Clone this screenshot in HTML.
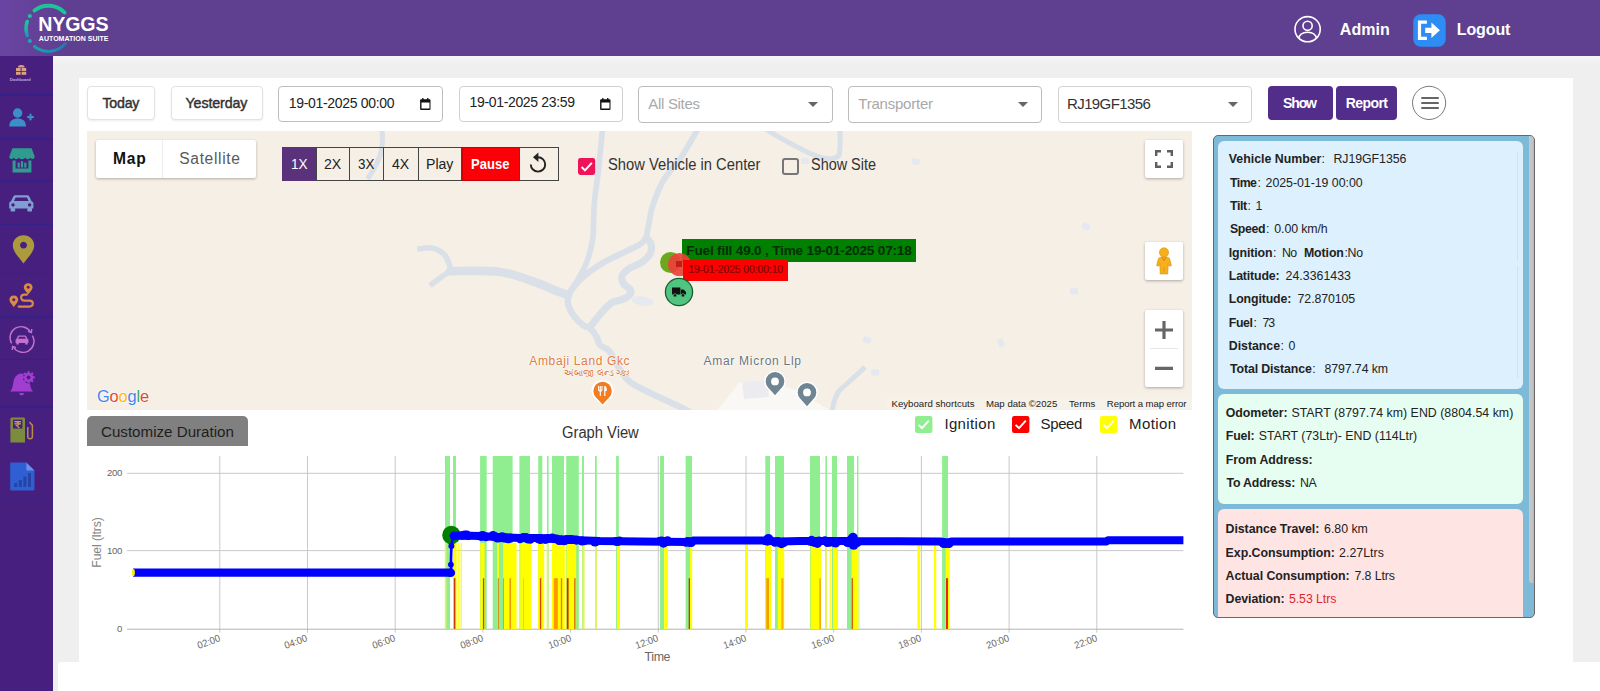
<!DOCTYPE html>
<html lang="en"><head><meta charset="utf-8"><title>NYGGS Automation Suite - Vehicle Playback</title>
<style>
html,body{margin:0;padding:0}
body{width:1600px;height:691px;overflow:hidden;position:relative;background:#efeff0;font-family:"Liberation Sans",sans-serif;}
.t{position:absolute;white-space:pre;}
.a{position:absolute;}
svg{position:absolute;overflow:visible}
#hdr{left:0;top:0;width:1600px;height:56px;background:linear-gradient(90deg,#6a44a2 0,#5e3f90 70px,#5e3f90 100%);}
#side{left:0;top:56px;width:53px;height:635px;background:#47207f;}
#card{left:79px;top:78px;width:1494px;height:613px;background:#fff;}
#bot{left:58px;top:662px;width:1542px;height:29px;background:#fff;border-top-left-radius:3px}
.btn{box-sizing:border-box;border:1px solid #e2e2e2;border-radius:4px;background:#fff;box-shadow:0 1px 2px rgba(0,0,0,.08);}
.inp{box-sizing:border-box;border:1px solid #c4c4c4;border-radius:4px;background:#fff;}
.pb{box-sizing:border-box;border-radius:4px;background:#532d8a;}
.sp{box-sizing:border-box;border:1px solid #444;top:147px;height:33.5px;}
.mc{background:#fff;border-radius:2px;box-shadow:0 1px 3px rgba(0,0,0,.3);}
</style></head><body>
<div class="a" id="hdr"></div>
<div class="a" id="side"></div>
<div class="a" style="left:53px;top:56px;width:1547px;height:8px;background:linear-gradient(#f6f6f8,#efeff0)"></div>
<div class="a" id="card"></div>
<div class="a" id="bot"></div>

<svg class="a" style="left:0;top:0" width="130" height="56" viewBox="0 0 130 56">
<defs><linearGradient id="lg" x1="0" y1="0" x2="0" y2="1"><stop offset="0" stop-color="#1fc39a"/><stop offset="0.55" stop-color="#1fb3a6"/><stop offset="1" stop-color="#2390c0"/></linearGradient>
<linearGradient id="lg2" gradientUnits="userSpaceOnUse" x1="30" y1="0" x2="68" y2="0"><stop offset="0" stop-color="#17a8a0"/><stop offset="0.6" stop-color="#1c8fb4"/><stop offset="1" stop-color="#2c6fa6"/></linearGradient></defs>
<g fill="none" stroke-linecap="round">
<path d="M34.5 10.5 A22.5 22.5 0 0 1 64.5 12.5" stroke="#1fc39a" stroke-width="3.900"/>
<path d="M27.2 21.5 A22.5 22.5 0 0 0 27.2 35.5" stroke="url(#lg)" stroke-width="3.600"/>
<path d="M34.5 46.5 A22.5 22.5 0 0 0 65.5 43.500" stroke="url(#lg2)" stroke-width="2.900"/>
</g>
<circle cx="29.8" cy="16" r="2.1" fill="#1fc39a"/><circle cx="29.8" cy="41" r="2.1" fill="#1fa6ae"/>
</svg>
<span class="t" style="left:38.30px;top:14.51px;font-size:19.6px;line-height:19.6px;color:#fff;font-weight:bold;letter-spacing:-0.148px;">NYGGS</span>
<span class="t" style="left:38.80px;top:34.97px;font-size:7px;line-height:7px;color:#fff;font-weight:bold;letter-spacing:0.023px;">AUTOMATION SUITE</span>
<svg class="a" style="left:1293px;top:15px" width="29" height="29" viewBox="0 0 29 29">
<defs><clipPath id="uc"><circle cx="14.6" cy="14.2" r="12.6"/></clipPath></defs>
<circle cx="14.6" cy="14.2" r="12.6" fill="none" stroke="#fff" stroke-width="1.6"/>
<circle cx="14.6" cy="10.8" r="4.6" fill="none" stroke="#fff" stroke-width="1.6"/>
<path d="M5.6 24 C6.2 18.6 10 17.2 14.6 17.2 C19.2 17.2 23 18.6 23.6 24" fill="none" stroke="#fff" stroke-width="1.6" clip-path="url(#uc)"/>
</svg>
<span class="t" style="left:1339.80px;top:21.66px;font-size:16px;line-height:16px;color:#fff;font-weight:bold;letter-spacing:0.032px;">Admin</span>
<svg class="a" style="left:1413px;top:14px" width="33" height="33" viewBox="0 0 33 33">
<rect x="0.2" y="0.3" width="32.5" height="32.5" rx="7.5" fill="#2e8cf5"/>
<path d="M13.9 8.100 H6.500 V24.400 H13.900" fill="none" stroke="#fff" stroke-width="3.200"/>
<path d="M12.2 13.700 H18.400 V8.400 L26.900 16.200 L18.400 24 V18.900 H12.200 Z" fill="#fff"/>
</svg>
<span class="t" style="left:1456.80px;top:21.66px;font-size:16px;line-height:16px;color:#fff;font-weight:bold;letter-spacing:-0.119px;">Logout</span>
<div class="a" style="left:0;top:94px;width:53px;height:1.5px;background:#34218a"></div>
<div class="a" style="left:0;top:138px;width:53px;height:1.5px;background:#34218a"></div>
<div class="a" style="left:0;top:180px;width:53px;height:1.5px;background:#34218a"></div>
<div class="a" style="left:0;top:223.5px;width:53px;height:1.5px;background:#34218a"></div>
<div class="a" style="left:0;top:272.5px;width:53px;height:1.5px;background:#34218a"></div>
<div class="a" style="left:0;top:316px;width:53px;height:1.5px;background:#34218a"></div>
<div class="a" style="left:0;top:358.5px;width:53px;height:1.5px;background:#34218a"></div>
<div class="a" style="left:0;top:406px;width:53px;height:1.5px;background:#34218a"></div>
<div class="a" style="left:0;top:451px;width:53px;height:1px;background:#3f2186"></div>
<div class="a" style="left:0;top:498px;width:53px;height:1px;background:#3f2186"></div>
<svg class="a" style="left:15px;top:65px" width="13" height="11" viewBox="0 0 13 11"><g fill="#dba184">
<rect x="1" y="3" width="4.6" height="3"/><rect x="6.6" y="3" width="4.6" height="3"/><rect x="1" y="6.8" width="4.6" height="3"/><rect x="6.6" y="6.8" width="4.6" height="3"/><path d="M3 2.4 A3.3 2.4 0 0 1 9.6 2.4Z"/></g></svg>
<span class="t" style="left:9.80px;top:78.48px;font-size:4.4px;line-height:4.4px;color:#b9a3dc;font-weight:bold;letter-spacing:-0.260px;">Dashboard</span>
<svg class="a" style="left:9px;top:108px" width="26" height="20" viewBox="0 0 26 20"><g fill="#3a8fc9">
<circle cx="8.6" cy="5" r="4.7"/><path d="M0.3 18.6 C0.3 12.6 4 10.6 8.6 10.6 C13.2 10.6 17 12.6 17 18.6Z"/>
<rect x="18.2" y="8" width="6.6" height="2.1"/><rect x="20.45" y="5.75" width="2.1" height="6.6"/></g></svg>
<svg class="a" style="left:9px;top:148px" width="26" height="25" viewBox="0 0 26 25"><g fill="#2f9c8f">
<path d="M3.4 0.3 H22.6 L25.7 8.6 C25.7 11.6 22.4 11.9 21.4 9.6 C20.4 11.9 17.2 11.9 16.2 9.6 C15.2 11.9 10.8 11.9 9.8 9.6 C8.8 11.9 5.6 11.9 4.6 9.6 C3.6 11.9 0.3 11.6 0.3 8.6Z"/>
<path d="M3.6 12.4 H6.6 V20.6 H19.4 V12.4 H22.4 V24.4 H3.6Z"/>
<rect x="8.6" y="14.6" width="2.2" height="5"/><rect x="11.9" y="13.2" width="2.2" height="6.4"/><rect x="15.2" y="14.6" width="2.2" height="5"/></g></svg>
<svg class="a" style="left:9px;top:195px" width="25" height="17" viewBox="0 0 25 17"><g fill="#7f9fd2">
<path d="M4.2 1.8 C4.8 0.6 5.6 0.2 7 0.2 H17.6 C19 0.2 19.8 0.6 20.4 1.8 L22.6 6.2 C23.9 6.6 24.4 7.4 24.4 8.8 V13.4 H0.2 V8.8 C0.2 7.4 0.7 6.6 2 6.2Z M6.6 2.4 L5 6 H19.6 L18 2.4Z M4 8.2 a1.7 1.7 0 1 0 .01 0Z M20.6 8.2 a1.7 1.7 0 1 0 .01 0Z"/>
<rect x="1.6" y="13" width="4.6" height="3.6" rx="0.8"/><rect x="18.4" y="13" width="4.6" height="3.6" rx="0.8"/></g></svg>
<svg class="a" style="left:12px;top:235px" width="23" height="29" viewBox="0 0 23 29">
<path fill-rule="evenodd" fill="#ad9a3c" d="M11.5 0.2 C17.6 0.2 22.2 4.8 22.2 10.6 C22.2 17.4 14.6 23.6 11.5 28.6 C8.4 23.6 0.8 17.4 0.8 10.6 C0.8 4.8 5.4 0.2 11.5 0.2Z M11.5 6.8 a3.4 3.4 0 1 0 .01 0Z"/></svg>
<svg class="a" style="left:9px;top:283px" width="26" height="26" viewBox="0 0 26 26"><g fill="none" stroke="#d98b41" stroke-width="2.1" stroke-linecap="round">
<path d="M9.6 23.6 H20.4 C25 23.6 25 17.6 20.4 17.6 H15.4 C11 17.6 11 11.6 15.4 11.6 H18"/></g>
<g fill="#d98b41" fill-rule="evenodd"><path d="M19.2 0.2 C22 0.2 23.6 2.2 23.6 4.4 C23.6 7 20.6 9 19.2 11.4 C17.8 9 14.8 7 14.8 4.4 C14.8 2.2 16.4 0.2 19.2 0.2Z M19.2 2.8 a1.5 1.5 0 1 0 .01 0Z"/>
<path d="M4.8 12.6 C7.6 12.6 9.2 14.6 9.2 16.8 C9.2 19.4 6.2 21.6 4.8 24.2 C3.4 21.6 0.4 19.4 0.4 16.8 C0.4 14.6 2 12.6 4.8 12.6Z M4.8 15.2 a1.5 1.5 0 1 0 .01 0Z"/></g></svg>
<svg class="a" style="left:9px;top:327px" width="26" height="25" viewBox="0 0 26 25"><g fill="none" stroke="#c371cf" stroke-width="1.4">
<path d="M2.6 16.4 A11 11 0 0 1 21.6 5"/><path d="M23.4 8.6 A11 11 0 0 1 4.4 20"/><path d="M19 4.4 L22.4 5.6 L22.8 2"/><path d="M7 20.6 L3.6 19.4 L3.2 23"/></g>
<path fill="#c371cf" d="M8.6 9.6 C9 8.8 9.4 8.6 10.2 8.6 H15.8 C16.6 8.6 17 8.8 17.4 9.6 L18.4 11.8 C19.2 12 19.4 12.6 19.4 13.4 V16 H6.6 V13.4 C6.6 12.6 6.8 12 7.6 11.8Z M10 9.8 L9.2 11.8 H16.8 L16 9.8Z M7.4 15.8 h2.4 v1.8 h-2.4Z M16.2 15.8 h2.4 v1.8 h-2.4Z"/></svg>
<svg class="a" style="left:9px;top:369px" width="26" height="28" viewBox="0 0 26 28">
<path fill="#a23dd2" d="M1 22.6 C4.6 19.6 3.6 13.6 5.4 9.6 C7 6 10 4.6 12.4 4.6 C13.4 4.6 14.2 4.8 15 5.2 C13.6 7.2 13.4 10.4 15.4 12.6 C17 14.4 19.2 15 21 14.6 C21.4 17.8 22 20.6 24 22.6Z M10.2 24 H15 A2.4 2.4 0 0 1 10.2 24Z"/>
<g transform="translate(19.6 8.4)"><circle r="4.6" fill="#a23dd2"/><circle r="1.9" fill="#47207f"/>
<g stroke="#a23dd2" stroke-width="2.2"><path d="M0 -6.2 V6.2 M-6.2 0 H6.2 M-4.4 -4.4 L4.4 4.4 M-4.4 4.4 L4.4 -4.4"/></g><circle r="1.9" fill="#47207f"/></g></svg>
<svg class="a" style="left:9.5px;top:416.5px" width="26" height="26" viewBox="0 0 26 26">
<path fill="#7c8c3c" d="M2 0.4 H13.4 C14.4 0.4 15 1 15 2 V25.6 H0.4 V2 C0.4 1 1 0.4 2 0.4Z"/>
<rect x="3" y="2.6" width="9.4" height="9" fill="#47207f"/>
<rect x="4.4" y="4" width="6.6" height="1.3" fill="#c9a14a"/><rect x="4.4" y="6.2" width="6.6" height="1.2" fill="#c9a14a"/><path d="M6.6 5 C9.6 5 9.6 8.4 6.4 8.4 L9.4 11" fill="none" stroke="#c9a14a" stroke-width="1.1"/>
<path d="M17.8 10 V19.4 C17.8 22.4 22.4 22.4 22.4 19.4 V8.4 L19.4 5" fill="none" stroke="#b98a48" stroke-width="1.5"/></svg>
<svg class="a" style="left:10px;top:461.5px" width="25" height="29" viewBox="0 0 25 29">
<path fill="#2f5fd2" d="M1.6 0.4 H16.4 L24.4 8.4 V27 C24.4 28 23.8 28.6 22.8 28.6 H1.6 C0.6 28.6 0.2 28 0.2 27 V1.8 C0.2 0.8 0.6 0.4 1.6 0.4Z"/>
<path fill="#6f8fe8" d="M16.4 0.4 L24.4 8.4 H16.4Z"/>
<g fill="#2444a8"><rect x="4.2" y="21" width="3" height="4"/><rect x="8.8" y="18" width="3" height="7"/><rect x="13.4" y="14.6" width="3" height="10.4"/><rect x="18" y="11" width="3" height="14"/></g></svg>
<div class="a btn" style="left:87px;top:86px;width:67.5px;height:34px"></div>
<span class="t" style="left:102.50px;top:95.98px;font-size:14.2px;line-height:14.2px;color:#333;letter-spacing:-0.223px;-webkit-text-stroke:.45px #333;">Today</span>
<div class="a btn" style="left:170.5px;top:86px;width:92px;height:34px"></div>
<span class="t" style="left:185.50px;top:95.98px;font-size:14.2px;line-height:14.2px;color:#333;letter-spacing:-0.079px;-webkit-text-stroke:.45px #333;">Yesterday</span>
<div class="a inp" style="left:278px;top:85.5px;width:165px;height:36.5px;border-color:#bebebe"></div>
<span class="t" style="left:288.80px;top:95.75px;font-size:14px;line-height:14px;color:#222;letter-spacing:-0.323px;">19-01-2025 00:00</span>
<svg class="a" style="left:419.7px;top:97.6px" width="11" height="12" viewBox="0 0 11 12"><path fill="#111" fill-rule="evenodd" d="M2.2 0 h1.3 v1.2 h3.6 V0 h1.3 v1.2 h1.1 a1 1 0 0 1 1 1 V11 a1 1 0 0 1 -1 1 H1.1 a1 1 0 0 1 -1 -1 V2.2 a1 1 0 0 1 1 -1 h1.1Z M1.5 4.4 V10.6 H9.5 V4.4Z"/></svg>
<div class="a inp" style="left:458.8px;top:86px;width:164px;height:35.5px;border-color:#d0d0d0"></div>
<span class="t" style="left:469.50px;top:95.15px;font-size:14px;line-height:14px;color:#222;letter-spacing:-0.336px;">19-01-2025 23:59</span>
<svg class="a" style="left:600.2px;top:97.6px" width="11" height="12" viewBox="0 0 11 12"><path fill="#111" fill-rule="evenodd" d="M2.2 0 h1.3 v1.2 h3.6 V0 h1.3 v1.2 h1.1 a1 1 0 0 1 1 1 V11 a1 1 0 0 1 -1 1 H1.1 a1 1 0 0 1 -1 -1 V2.2 a1 1 0 0 1 1 -1 h1.1Z M1.5 4.4 V10.6 H9.5 V4.4Z"/></svg>
<div class="a inp" style="left:638.3px;top:86px;width:194.4px;height:36.6px;border-color:#bcbcbc"></div>
<span class="t" style="left:648.30px;top:96.30px;font-size:15px;line-height:15px;color:#a9a9a9;letter-spacing:-0.311px;">All Sites</span>
<svg class="a" style="left:808px;top:101.6px" width="10" height="5" viewBox="0 0 10 5"><path d="M0 0 H10 L5 5Z" fill="#666"/></svg>
<div class="a inp" style="left:848.3px;top:86px;width:193.6px;height:36.6px;border-color:#bcbcbc"></div>
<span class="t" style="left:858.30px;top:96.30px;font-size:15px;line-height:15px;color:#a9a9a9;letter-spacing:-0.227px;">Transporter</span>
<svg class="a" style="left:1017.5px;top:101.6px" width="10" height="5" viewBox="0 0 10 5"><path d="M0 0 H10 L5 5Z" fill="#666"/></svg>
<div class="a inp" style="left:1057.5px;top:86px;width:194.4px;height:36.6px;border-color:#d2d2d2"></div>
<span class="t" style="left:1067.00px;top:96.30px;font-size:15px;line-height:15px;color:#333;letter-spacing:-0.602px;">RJ19GF1356</span>
<svg class="a" style="left:1228px;top:101.6px" width="10" height="5" viewBox="0 0 10 5"><path d="M0 0 H10 L5 5Z" fill="#666"/></svg>
<div class="a pb" style="left:1267.5px;top:86px;width:65.3px;height:34px"></div>
<span class="t" style="left:1283.00px;top:96.15px;font-size:14px;line-height:14px;color:#fff;font-weight:bold;letter-spacing:-1.111px;">Show</span>
<div class="a pb" style="left:1336.3px;top:86px;width:60.8px;height:34px"></div>
<span class="t" style="left:1345.80px;top:96.15px;font-size:14px;line-height:14px;color:#fff;font-weight:bold;letter-spacing:-0.582px;">Report</span>
<svg class="a" style="left:1411px;top:84.5px" width="36" height="36" viewBox="0 0 36 36"><circle cx="18.1" cy="17.9" r="16.6" fill="#fff" stroke="#6a6a6a" stroke-width=".9"/>
<path d="M10.3 13 H27.8 M10.3 18 H27.8 M10.3 23 H27.8" stroke="#666" stroke-width="1.9"/></svg>
<div class="a" id="map" style="left:87px;top:131px;width:1105px;height:278.8px;background:#f5efe6;overflow:hidden">
<svg class="a" style="left:0;top:0" width="1105" height="278" viewBox="0 0 1105 278"><g fill="none" stroke="#d9e0e8" stroke-linejoin="round">
<path d="M515.5 -2.0 C514.9 4.7 512.9 26.0 511.6 38.0 C510.3 50.0 508.3 61.5 507.5 70.0 C506.7 78.5 506.9 82.7 506.6 89.0 C506.3 95.3 506.8 100.9 505.7 107.8 C504.6 114.7 502.5 123.5 500.0 130.4 C497.5 137.3 493.7 143.7 490.6 149.2 C487.5 154.7 482.8 161.0 481.2 163.4" stroke-width="5.6" stroke-linecap="round"/>
<path d="M610.7 -2.0 C608.1 2.5 600.9 16.2 595.0 25.0 C589.1 33.8 580.5 42.3 575.5 51.0 C570.5 59.7 567.1 70.7 565.0 77.0 C562.9 83.3 563.4 85.1 562.6 89.0 C561.8 92.9 560.8 97.3 560.3 100.3 C559.8 103.3 559.5 105.8 559.4 106.9" stroke-width="5.8" stroke-linecap="round"/>
<path d="M559.4 106.9 C560.2 108.0 563.5 110.8 564.1 113.5 C564.7 116.2 564.7 119.9 563.1 122.9 C561.5 125.9 558.2 128.9 554.6 131.4 C551.0 133.9 544.8 135.6 541.5 137.9 C538.2 140.2 535.7 143.0 534.9 145.5 C534.1 148.0 535.4 150.8 536.8 153.0 C538.2 155.2 542.5 156.7 543.4 158.6 C544.3 160.5 544.0 162.6 542.4 164.3 C540.8 166.0 536.9 167.8 533.9 169.0 C530.9 170.2 528.0 169.5 524.5 171.8 C521.0 174.2 516.8 179.0 513.2 183.1 C509.6 187.2 504.6 194.1 502.9 196.3" stroke-width="7.2" stroke-linecap="round"/>
<path d="M481.2 163.4 C483.4 160.7 488.8 152.6 494.4 147.4 C500.0 142.2 507.9 136.7 515.1 132.3 C522.3 127.9 531.4 124.1 537.7 121.0 C544.0 117.9 549.2 115.8 552.8 113.5 C556.4 111.2 558.3 108.0 559.4 106.9" stroke-width="6.2" stroke-linecap="round"/>
<path d="M330.3 118.3 C332.8 118.1 340.9 116.0 345.5 117.1 C350.1 118.1 355.0 120.9 358.1 124.6 C361.2 128.3 363.3 136.9 364.3 139.4" stroke-width="5.6" stroke-linecap="butt"/>
<path d="M363.0 140.2 C371.4 140.3 398.5 138.9 413.1 140.9 C427.7 142.9 441.9 149.2 450.7 152.1 C459.5 155.0 460.9 156.5 466.0 158.5 C471.1 160.5 478.7 163.3 481.2 164.3" stroke-width="8.6" stroke-linecap="round"/>
<path d="M366.0 138.4 C363.8 139.8 356.8 144.3 353.0 147.0 C349.2 149.7 344.7 153.3 343.0 154.6" stroke-width="5.6" stroke-linecap="butt"/>
<path d="M481.2 164.3 C481.2 165.9 480.2 170.2 481.2 173.7 C482.1 177.1 484.4 181.6 486.9 185.0 C489.4 188.4 493.6 192.4 496.3 194.4 C499.0 196.4 500.7 195.3 502.9 197.2 C505.1 199.1 507.8 202.9 509.5 205.7 C511.2 208.5 510.9 211.6 513.0 214.0 C515.1 216.4 519.3 216.6 522.2 220.0 C525.1 223.4 526.9 229.2 530.3 234.3 C533.7 239.4 536.7 245.8 542.4 250.5 C548.1 255.2 556.3 258.4 564.7 262.6 C573.1 266.8 586.6 272.7 593.0 275.8 C599.4 278.9 601.3 280.1 603.0 281.0" stroke-width="6.4" stroke-linecap="round"/>
<path d="M294.9 -2 C295.8 6 295.6 12 294.6 18 C293 28 289 36 280.5 48" stroke-width="5" stroke-linecap="butt"/>
<path d="M679 -2 C690 6 706 14 722 22 C736 28 748 30 752 24 C754 16 753 8 753 -2" stroke-width="5" stroke-linecap="round"/>
<path d="M778 236 C768 246 758 254 752 260 C748 266 746 272 745 282" stroke-width="5" stroke-linecap="butt"/>
</g>
<g fill="#e4e8f0"><ellipse cx="555.6" cy="170" rx="11" ry="4.500" transform="rotate(8 555.6 170)" opacity=".9"/><rect x="824.8" y="27.6" width="8" height="6" rx="1.5" transform="rotate(10 828.8 30.6)"/><rect x="995.0" y="92.5" width="8" height="6" rx="1.5" transform="rotate(25 999 95.5)"/><rect x="983.0" y="157.3" width="8" height="6" rx="1.5" transform="rotate(0 987 160.3)"/><rect x="776.0" y="206.0" width="8" height="6" rx="1.5" transform="rotate(15 780 209)"/><rect x="910.0" y="208.8" width="8" height="6" rx="1.5" transform="rotate(70 914 211.8)"/><rect x="784.0" y="238.4" width="8" height="6" rx="1.5" transform="rotate(0 788 241.4)"/><rect x="714.0" y="27.0" width="8" height="6" rx="1.5" transform="rotate(0 718 30)"/></g>
<path d="M628 282 L652 252 L676 249 L706 258 L748 282Z" fill="#f9f8f5"/><path d="M655 251 L680 249 L682 266 L657 268Z" fill="#ececf0"/>
</svg>
<span class="t" style="left:442.30px;top:223.94px;font-size:12px;line-height:12px;color:#e27b3c;letter-spacing:0.637px;text-shadow:0 0 2px #fff,0 0 2px #fff,0 0 1px #fff;">Ambaji Land Gkc</span>
<span class="t" style="left:477.30px;top:237.80px;font-size:8.5px;line-height:8.5px;color:#e27b3c;text-shadow:0 0 2px #fff,0 0 2px #fff,0 0 1px #fff;width:65px;overflow:hidden;">અંબાજી લેન્ડ ગ્કક</span>
<span class="t" style="left:616.50px;top:224.34px;font-size:12px;line-height:12px;color:#6a7580;letter-spacing:0.724px;text-shadow:0 0 2px #fff,0 0 2px #fff,0 0 1px #fff;">Amar Micron Llp</span>
<svg class="a" style="left:504px;top:248.400px" width="24" height="30" viewBox="0 0 24 30">
<path d="M11.6 1 A10.6 10.6 0 0 1 18.6 20 L11.6 27.6 L4.6 20 A10.6 10.6 0 0 1 11.6 1Z" fill="#fff"/>
<circle cx="11.6" cy="12" r="9.2" fill="#f37b20"/><path d="M5.6 19 L11.6 25.6 L17.6 19Z" fill="#f37b20"/>
<g stroke="#fff" fill="none" stroke-width="1.1"><path d="M7.6 7 V10.4 A1.7 1.7 0 0 0 11 10.4 V7 M9.3 7 V17"/></g><path d="M13.2 17 V7 C15.6 7 15.8 9 15.8 12 H14.4 V17Z" fill="#fff"/></svg>
<svg class="a" style="left:675.8px;top:238.49999999999997px" width="24" height="28" viewBox="0 0 24 28">
<circle cx="12" cy="11.4" r="10.7" fill="#fff"/><path d="M5.600 19.400 L12 26.800 L18.400 19.400Z" fill="#fff"/>
<circle cx="12" cy="11.4" r="9.300" fill="#6f8594"/><path d="M6 18.600 L12 25.200 L18 18.600Z" fill="#6f8594"/><circle cx="12" cy="11.4" r="3.900" fill="#fff"/></svg>
<svg class="a" style="left:707.9px;top:249.49999999999997px" width="24" height="28" viewBox="0 0 24 28">
<circle cx="12" cy="11.4" r="10.7" fill="#fff"/><path d="M5.600 19.400 L12 26.800 L18.400 19.400Z" fill="#fff"/>
<circle cx="12" cy="11.4" r="9.300" fill="#6f8594"/><path d="M6 18.600 L12 25.200 L18 18.600Z" fill="#6f8594"/><circle cx="12" cy="11.4" r="3.900" fill="#fff"/></svg>
<span class="t" style="left:10.00px;top:257.12px;font-size:16.4px;line-height:16.4px;color:#4285f4;letter-spacing:-0.177px;text-shadow:0 0 2px #fff,0 0 2px #fff;"><span style="color:#4285f4">G</span><span style="color:#ea4335">o</span><span style="color:#fbbc05">o</span><span style="color:#4285f4">g</span><span style="color:#34a853">l</span><span style="color:#ea4335">e</span></span>
<div class="a" style="left:800px;top:265px;width:305px;height:13px;background:rgba(255,255,255,.12)"></div>
<span class="t" style="left:804.50px;top:267.87px;font-size:9.6px;line-height:9.6px;color:#222;letter-spacing:0.023px;">Keyboard shortcuts</span>
<span class="t" style="left:899.00px;top:267.87px;font-size:9.6px;line-height:9.6px;color:#222;letter-spacing:0.013px;">Map data ©2025</span>
<span class="t" style="left:982.00px;top:267.87px;font-size:9.6px;line-height:9.6px;color:#222;letter-spacing:0.067px;">Terms</span>
<span class="t" style="left:1019.80px;top:267.87px;font-size:9.6px;line-height:9.6px;color:#222;letter-spacing:-0.077px;">Report a map error</span>
<div class="a" style="left:9px;top:9px;width:160px;height:38px;background:#fff;border-radius:2px;box-shadow:0 1px 3px rgba(0,0,0,.28)"></div>
<div class="a" style="left:75px;top:9px;width:1px;height:38px;background:#ececec"></div>
<span class="t" style="left:25.90px;top:19.89px;font-size:15.6px;line-height:15.6px;color:#111;font-weight:bold;letter-spacing:0.899px;">Map</span>
<span class="t" style="left:92.30px;top:19.89px;font-size:15.6px;line-height:15.6px;color:#5a5a5a;letter-spacing:0.637px;">Satellite</span>
<div class="a sp" style="left:194.6px;top:16px;width:35.1px;background:#5a317b;border-color:#5a317b;"></div>
<div class="a sp" style="left:228.7px;top:16px;width:34.7px;"></div>
<div class="a sp" style="left:262.4px;top:16px;width:34.7px;"></div>
<div class="a sp" style="left:296.1px;top:16px;width:35.7px;"></div>
<div class="a sp" style="left:330.8px;top:16px;width:44.7px;"></div>
<div class="a sp" style="left:374.5px;top:16px;width:58.0px;background:#fb0007;border-color:#c00;"></div>
<div class="a sp" style="left:431.5px;top:16px;width:40.0px;"></div>
<span class="t" style="left:203.60px;top:25.16px;font-size:15.4px;line-height:15.4px;color:#fff;transform-origin:0 50%;transform:scaleX(0.8812);">1X</span>
<span class="t" style="left:236.60px;top:25.16px;font-size:15.4px;line-height:15.4px;color:#222;transform-origin:0 50%;transform:scaleX(0.9131);">2X</span>
<span class="t" style="left:271.20px;top:25.16px;font-size:15.4px;line-height:15.4px;color:#222;transform-origin:0 50%;transform:scaleX(0.8706);">3X</span>
<span class="t" style="left:305.20px;top:25.16px;font-size:15.4px;line-height:15.4px;color:#222;transform-origin:0 50%;transform:scaleX(0.9131);">4X</span>
<span class="t" style="left:339.40px;top:25.16px;font-size:15.4px;line-height:15.4px;color:#222;transform-origin:0 50%;transform:scaleX(0.9146);">Play</span>
<span class="t" style="left:384.00px;top:25.16px;font-size:15.4px;line-height:15.4px;color:#fff;font-weight:bold;transform-origin:0 50%;transform:scaleX(0.8463);">Pause</span>
<svg class="a" style="left:441px;top:21px" width="20" height="22" viewBox="0 0 20 22"><path d="M10 5.2 A7.2 7.2 0 1 1 2.8 12.4" fill="none" stroke="#222" stroke-width="1.9"/><path d="M10.4 0.4 L5 5.2 L10.4 10Z" fill="#222"/></svg>
<svg class="a" style="left:491.4px;top:27px" width="18" height="18" viewBox="0 0 18 18"><rect x="0" y="0" width="17.2" height="17" rx="2.4" fill="#ef1459"/><path d="M3.6 9 L7 12.4 L13.8 4.8" fill="none" stroke="#fff" stroke-width="2"/></svg>
<span class="t" style="left:520.60px;top:26.39px;font-size:15.6px;line-height:15.6px;color:#333;transform-origin:0 50%;transform:scaleX(0.9448);">Show Vehicle in Center</span>
<div class="a" style="left:694.6px;top:27px;width:13px;height:13px;border:2px solid #767676;border-radius:3px"></div>
<span class="t" style="left:723.60px;top:26.39px;font-size:15.6px;line-height:15.6px;color:#333;transform-origin:0 50%;transform:scaleX(0.9254);">Show Site</span>
<div class="a mc" style="left:1058px;top:9px;width:38px;height:38px"></div>
<svg class="a" style="left:1068px;top:19.4px" width="18" height="18" viewBox="0 0 18 18"><path d="M1.2 6 V1.2 H6 M12 1.2 H16.8 V6 M16.8 12 V16.8 H12 M6 16.8 H1.2 V12" fill="none" stroke="#5f5f5f" stroke-width="2.4"/></svg>
<div class="a mc" style="left:1058px;top:111px;width:38px;height:38px"></div>
<svg class="a" style="left:1068px;top:116px" width="18" height="28" viewBox="0 0 18 28"><g fill="#f6b01a" stroke="#d98f12" stroke-width=".6">
<circle cx="9" cy="5.4" r="4.6"/><path d="M3.4 11.6 C4.4 10 6 10 9 10 C12 10 13.600 10 14.6 11.6 L16.400 18.6 L14.2 19.2 L13.2 16.400 L12.800 27 H9.4 L9 20.600 L8.600 27 H5.200 L4.800 16.400 L3.800 19.200 L1.600 18.600Z"/></g><path d="M7 10.400 L9 13.600 L11 10.400" fill="none" stroke="#e07d10" stroke-width="1"/></svg>
<div class="a mc" style="left:1058px;top:179px;width:38px;height:77px"></div>
<div class="a" style="left:1063px;top:217px;width:28px;height:1px;background:#e6e6e6"></div>
<svg class="a" style="left:1068px;top:189.500px" width="18" height="62" viewBox="0 0 18 62"><path d="M0 9 H18 M9 0 V18 M0 47.400 H18" stroke="#666" stroke-width="3.200" fill="none"/></svg>
<div class="a" style="left:572.5px;top:121px;width:21px;height:21px;border-radius:50%;background:#6aa820"></div>
<div class="a" style="left:595.2px;top:108.100px;width:233.800px;height:23px;background:#008000"></div>
<span class="t" style="left:599.30px;top:113.49px;font-size:13.6px;line-height:13.6px;color:#052e05;font-weight:bold;letter-spacing:-0.189px;">Fuel fill 49.0 , Time 19-01-2025 07:18</span>
<div class="a" style="left:580.8px;top:122.300px;width:23px;height:23px;border-radius:50%;background:rgba(234,66,54,.92)"></div>
<div class="a" style="left:589.4px;top:129.800px;width:5.800px;height:5.800px;background:#c81c1c"></div>
<div class="a" style="left:596.1px;top:128.700px;width:104.700px;height:21px;background:#fe0000"></div>
<span class="t" style="left:601.40px;top:134.08px;font-size:10.3px;line-height:10.3px;color:#8e0505;letter-spacing:-0.053px;text-shadow:0 0 .5px #8e0505;">19-01-2025 00:00:10</span>
<svg class="a" style="left:577.4px;top:146px" width="30" height="30" viewBox="0 0 30 30"><circle cx="15" cy="15" r="13.600" fill="#52c481" stroke="#155f2c" stroke-width="1.3"/>
<path fill="#111" d="M8 10.400 H16.400 V17.400 H8Z M16.900 12.400 H19.600 L22 15 V17.400 H16.900Z"/><circle cx="11" cy="18.400" r="1.700" fill="#111" stroke="#52c481" stroke-width=".7"/><circle cx="19" cy="18.400" r="1.700" fill="#111" stroke="#52c481" stroke-width=".7"/></svg>
</div>
<div class="a" style="left:87px;top:416px;width:161.4px;height:30px;background:#808080;border-radius:5px 5px 0 0"></div>
<span class="t" style="left:101.20px;top:423.86px;font-size:15.4px;line-height:15.4px;color:#1e1e1e;transform-origin:0 50%;transform:scaleX(0.9835);">Customize Duration</span>
<span class="t" style="left:562.20px;top:425.19px;font-size:15.6px;line-height:15.6px;color:#333;transform-origin:0 50%;transform:scaleX(0.9455);">Graph View</span>
<svg class="a" style="left:915.4px;top:416.3px" width="18" height="18" viewBox="0 0 18 18"><rect width="17.4" height="16.9" rx="2.2" fill="#90ee90"/><path d="M3.6 8.8 L7 12.2 L13.8 4.600" fill="none" stroke="#fff" stroke-width="1.9"/></svg>
<span class="t" style="left:944.40px;top:416.20px;font-size:15px;line-height:15px;color:#222;letter-spacing:0.361px;">Ignition</span>
<svg class="a" style="left:1012.1px;top:416.3px" width="18" height="18" viewBox="0 0 18 18"><rect width="17.4" height="16.9" rx="2.2" fill="#fe0000"/><path d="M3.6 8.8 L7 12.2 L13.8 4.600" fill="none" stroke="#fff" stroke-width="1.9"/></svg>
<span class="t" style="left:1040.60px;top:416.20px;font-size:15px;line-height:15px;color:#222;letter-spacing:-0.394px;">Speed</span>
<svg class="a" style="left:1100px;top:416.3px" width="18" height="18" viewBox="0 0 18 18"><rect width="17.4" height="16.9" rx="2.2" fill="#ffff00"/><path d="M3.6 8.8 L7 12.2 L13.8 4.600" fill="none" stroke="#fff" stroke-width="1.9"/></svg>
<span class="t" style="left:1129.10px;top:416.20px;font-size:15px;line-height:15px;color:#222;letter-spacing:0.415px;">Motion</span>
<svg class="a" style="left:0;top:0" width="1600" height="691" viewBox="0 0 1600 691">
<g stroke="#c9c9c9" stroke-width="1" fill="none">
<path d="M219.8 456.0 V632.6"/>
<path d="M307.5 456.0 V632.6"/>
<path d="M395.2 456.0 V632.6"/>
<path d="M482.9 456.0 V632.6"/>
<path d="M570.6 456.0 V632.6"/>
<path d="M658.3 456.0 V632.6"/>
<path d="M746.0 456.0 V632.6"/>
<path d="M833.7 456.0 V632.6"/>
<path d="M921.4 456.0 V632.6"/>
<path d="M1009.1 456.0 V632.6"/>
<path d="M1096.8 456.0 V632.6"/>
<path d="M127 473.3 H1183.4"/>
<path d="M127 550.6 H1183.4"/>
</g>
<path d="M127 629.2 H1183.4" stroke="#b2b2b2" stroke-width="1" fill="none"/>
<g fill="#90ee90">
<rect x="445" y="456.0" width="5.0" height="173.0"/>
<rect x="453" y="456.0" width="3.0" height="173.0"/>
<rect x="480.1" y="456.0" width="6.6" height="173.0"/>
<rect x="492.7" y="456.0" width="19.9" height="173.0"/>
<rect x="519.4" y="456.0" width="10.6" height="173.0"/>
<rect x="538.2" y="456.0" width="4.1" height="173.0"/>
<rect x="547" y="456.0" width="1.6" height="173.0"/>
<rect x="552" y="456.0" width="12.0" height="173.0"/>
<rect x="566.2" y="456.0" width="12.6" height="173.0"/>
<rect x="582" y="456.0" width="2.0" height="173.0"/>
<rect x="595" y="456.0" width="1.8" height="173.0"/>
<rect x="616.1" y="456.0" width="2.7" height="173.0"/>
<rect x="660" y="456.0" width="4.0" height="173.0"/>
<rect x="685.6" y="456.0" width="6.4" height="173.0"/>
<rect x="765.3" y="456.0" width="4.7" height="173.0"/>
<rect x="775" y="456.0" width="9.0" height="173.0"/>
<rect x="810" y="456.0" width="10.0" height="173.0"/>
<rect x="825.4" y="456.0" width="1.6" height="173.0"/>
<rect x="832" y="456.0" width="5.0" height="173.0"/>
<rect x="847" y="456.0" width="7.0" height="173.0"/>
<rect x="857" y="456.0" width="1.4" height="173.0"/>
<rect x="942.1" y="456.0" width="5.9" height="173.0"/>
</g>
<g fill="#ffff00">
<rect x="444.8" y="543" width="1.6" height="86.0" fill="#e6f45c"/>
<rect x="453" y="543" width="3.6" height="86.0"/>
<rect x="458.2" y="543" width="1.2" height="86.0"/>
<rect x="460.6" y="543" width="1.2" height="86.0"/>
<rect x="480.3" y="543" width="4.3" height="86.0"/>
<rect x="497.2" y="543" width="1.8" height="86.0"/>
<rect x="503.2" y="543" width="13.4" height="86.0"/>
<rect x="520.2" y="543" width="11.0" height="86.0"/>
<rect x="538.1" y="543" width="6.1" height="86.0"/>
<rect x="546.6" y="543" width="1.8" height="86.0" fill="#e6f45c"/>
<rect x="551.8" y="543" width="13.0" height="86.0"/>
<rect x="566.5" y="543" width="9.7" height="86.0"/>
<rect x="582.4" y="543" width="2.2" height="86.0" fill="#e6f45c"/>
<rect x="595" y="543" width="1.8" height="86.0" fill="#e6f45c"/>
<rect x="617" y="543" width="3.0" height="86.0"/>
<rect x="664.2" y="543" width="3.6" height="86.0"/>
<rect x="690" y="543" width="2.2" height="86.0"/>
<rect x="745.6" y="543" width="2.4" height="86.0"/>
<rect x="765.6" y="543" width="5.4" height="86.0"/>
<rect x="777.8" y="543" width="6.4" height="86.0"/>
<rect x="810.6" y="543" width="10.6" height="86.0"/>
<rect x="825.8" y="543" width="1.2" height="86.0" fill="#e6f45c"/>
<rect x="829.6" y="543" width="1.2" height="86.0"/>
<rect x="833" y="543" width="5.0" height="86.0"/>
<rect x="851.6" y="543" width="6.4" height="86.0"/>
<rect x="858.6" y="543" width="1.0" height="86.0"/>
<rect x="917.4" y="543" width="2.8" height="86.0"/>
<rect x="934" y="543" width="2.2" height="86.0"/>
<rect x="945.6" y="543" width="4.2" height="86.0"/>
</g>
<rect x="453.8" y="578.2" width="1.6" height="50.799999999999955" fill="#c83c00"/>
<rect x="482.9" y="578.2" width="1.3" height="50.799999999999955" fill="#c84a00"/>
<rect x="497.8" y="578.2" width="1.0" height="50.799999999999955" fill="#c87a20"/>
<rect x="503" y="578.2" width="1.0" height="50.799999999999955" fill="#f0a000"/>
<rect x="509.5" y="578.2" width="1.4" height="50.799999999999955" fill="#e89000"/>
<rect x="523" y="578.2" width="0.8" height="50.799999999999955" fill="#f8c800"/>
<rect x="539.9" y="578.2" width="1.3" height="50.799999999999955" fill="#e03c00"/>
<rect x="553.8" y="578.2" width="4.0" height="50.799999999999955" fill="#ff9800"/>
<rect x="560.8" y="578.2" width="1.4" height="50.799999999999955" fill="#f08000"/>
<rect x="566.8" y="578.2" width="1.8" height="50.799999999999955" fill="#c83000"/>
<rect x="574" y="578.2" width="1.6" height="50.799999999999955" fill="#e08000"/>
<rect x="688.7" y="578.2" width="1.2" height="50.799999999999955" fill="#b03000"/>
<rect x="766.3" y="578.2" width="2.7" height="50.799999999999955" fill="#f0a000"/>
<rect x="781.3" y="578.2" width="2.2" height="50.799999999999955" fill="#ffb000"/>
<rect x="819.5" y="578.2" width="1.2" height="50.799999999999955" fill="#f09000"/>
<rect x="851.6" y="578.2" width="1.4" height="50.799999999999955" fill="#e06000"/>
<rect x="946" y="578.2" width="2.0" height="50.799999999999955" fill="#e82800"/>
<circle cx="451.4" cy="535" r="9.2" fill="#008000"/>
<path d="M451.3 573 L451 560 L451.4 546 L453 536" fill="none" stroke="#0000fe" stroke-width="2.6"/>
<path d="M133 572.6 H450.6" fill="none" stroke="#0000fe" stroke-width="8.2"/>
<path d="M453.2 535.8 L460 535.6 L480 536 L500 537.2 L520 538 L540 538 L560 539.6 L580 540.2 L600 541 L640 541.6 L688 542 L694 540.4 L760 540.4 L766 540.4 L768 539 L770 541 L780 541.4 L800 541 L850 541 L852.6 538 L854.4 543 L856 541 L940 541.4 L948 542.4 L952 541.4 L1106 541.6 L1108 540.2 L1183.4 540.2" fill="none" stroke="#0000fe" stroke-width="8" stroke-linejoin="round"/>
<g fill="#0000fe">
<circle cx="462.0" cy="535.5" r="4.2"/>
<circle cx="464.6" cy="534.9" r="4.5"/>
<circle cx="466.8" cy="534.9" r="4.5"/>
<circle cx="468.5" cy="535.9" r="4.2"/>
<circle cx="481.0" cy="536.2" r="4.8"/>
<circle cx="482.8" cy="535.7" r="4.6"/>
<circle cx="485.9" cy="536.9" r="4.4"/>
<circle cx="493.0" cy="535.9" r="4.8"/>
<circle cx="495.1" cy="536.3" r="4.2"/>
<circle cx="497.2" cy="538.2" r="4.2"/>
<circle cx="499.7" cy="537.8" r="4.4"/>
<circle cx="502.2" cy="536.4" r="4.1"/>
<circle cx="504.1" cy="538.1" r="4.4"/>
<circle cx="506.2" cy="538.0" r="4.5"/>
<circle cx="508.3" cy="538.6" r="4.7"/>
<circle cx="510.3" cy="538.1" r="4.5"/>
<circle cx="520.0" cy="538.9" r="4.3"/>
<circle cx="523.2" cy="537.3" r="4.4"/>
<circle cx="526.0" cy="537.4" r="4.5"/>
<circle cx="527.6" cy="538.7" r="4.7"/>
<circle cx="530.2" cy="539.3" r="4.4"/>
<circle cx="538.0" cy="538.5" r="4.6"/>
<circle cx="540.3" cy="539.2" r="4.9"/>
<circle cx="542.7" cy="538.9" r="4.1"/>
<circle cx="545.4" cy="539.1" r="4.9"/>
<circle cx="548.3" cy="538.4" r="4.4"/>
<circle cx="552.0" cy="538.0" r="4.5"/>
<circle cx="553.9" cy="538.4" r="4.1"/>
<circle cx="556.7" cy="538.7" r="4.3"/>
<circle cx="558.9" cy="540.8" r="4.2"/>
<circle cx="561.2" cy="540.1" r="4.8"/>
<circle cx="564.2" cy="541.0" r="4.3"/>
<circle cx="566.4" cy="539.7" r="4.8"/>
<circle cx="569.5" cy="539.3" r="4.2"/>
<circle cx="571.5" cy="539.6" r="4.5"/>
<circle cx="574.1" cy="539.7" r="4.1"/>
<circle cx="576.3" cy="540.1" r="4.6"/>
<circle cx="582.0" cy="541.1" r="4.5"/>
<circle cx="584.6" cy="541.1" r="4.1"/>
<circle cx="595.0" cy="541.8" r="4.8"/>
<circle cx="616.0" cy="541.3" r="4.4"/>
<circle cx="617.8" cy="541.9" r="4.1"/>
<circle cx="619.5" cy="540.8" r="4.2"/>
<circle cx="660.0" cy="540.9" r="4.1"/>
<circle cx="661.8" cy="541.0" r="4.4"/>
<circle cx="663.5" cy="543.1" r="4.6"/>
<circle cx="665.3" cy="541.5" r="4.4"/>
<circle cx="667.5" cy="541.1" r="4.8"/>
<circle cx="686.0" cy="542.2" r="4.5"/>
<circle cx="687.7" cy="541.3" r="4.4"/>
<circle cx="689.8" cy="542.7" r="4.2"/>
<circle cx="691.4" cy="542.6" r="4.5"/>
<circle cx="765.0" cy="540.8" r="4.1"/>
<circle cx="767.4" cy="540.9" r="4.8"/>
<circle cx="770.2" cy="540.7" r="4.4"/>
<circle cx="775.0" cy="542.2" r="4.5"/>
<circle cx="777.8" cy="541.2" r="4.3"/>
<circle cx="780.7" cy="542.9" r="4.8"/>
<circle cx="783.6" cy="542.5" r="4.7"/>
<circle cx="810.0" cy="541.3" r="4.4"/>
<circle cx="811.6" cy="540.1" r="4.3"/>
<circle cx="813.7" cy="541.8" r="4.9"/>
<circle cx="816.0" cy="542.4" r="4.9"/>
<circle cx="819.1" cy="540.9" r="4.3"/>
<circle cx="825.0" cy="540.5" r="4.3"/>
<circle cx="827.6" cy="542.3" r="4.8"/>
<circle cx="830.0" cy="541.7" r="4.7"/>
<circle cx="831.7" cy="541.7" r="4.8"/>
<circle cx="834.6" cy="542.0" r="4.5"/>
<circle cx="836.4" cy="542.1" r="4.4"/>
<circle cx="847.0" cy="542.5" r="4.4"/>
<circle cx="849.2" cy="542.5" r="4.7"/>
<circle cx="851.1" cy="539.0" r="4.2"/>
<circle cx="854.2" cy="543.4" r="4.2"/>
<circle cx="857.1" cy="542.6" r="4.6"/>
<circle cx="942.0" cy="542.1" r="4.2"/>
<circle cx="943.6" cy="543.4" r="4.6"/>
<circle cx="946.1" cy="543.6" r="4.4"/>
<circle cx="949.1" cy="543.3" r="4.3"/>
<circle cx="450.9" cy="564.6" r="2.9"/><circle cx="450.8" cy="572.8" r="4.3"/><circle cx="451.4" cy="546" r="3"/><circle cx="454" cy="535.8" r="4.4"/><circle cx="781.5" cy="543.6" r="4.6"/><circle cx="817.5" cy="543.4" r="4.5"/><circle cx="835.5" cy="543" r="4.5"/><circle cx="853" cy="537.6" r="4.8"/><circle cx="853.6" cy="545" r="4.8"/><circle cx="768.4" cy="539" r="5"/><circle cx="949" cy="543.4" r="4.6"/>
</g>
<ellipse cx="133.4" cy="572.6" rx="1.5" ry="3.6" fill="#f4f000"/>
</svg>
<span class="t" style="left:107.00px;top:468.47px;font-size:9.6px;line-height:9.6px;color:#666;letter-spacing:-0.309px;">200</span>
<span class="t" style="left:107.00px;top:545.87px;font-size:9.6px;line-height:9.6px;color:#666;letter-spacing:-0.309px;">100</span>
<span class="t" style="left:117.00px;top:624.27px;font-size:9.6px;line-height:9.6px;color:#666;">0</span>
<span class="t" style="left:57px;top:536px;width:80px;text-align:center;font-size:12.2px;line-height:13px;color:#858585;transform:rotate(-90deg);letter-spacing:-.1px">Fuel (ltrs)</span>
<span class="t" style="left:644.50px;top:651.10px;font-size:12.4px;line-height:12.4px;color:#666;letter-spacing:-0.365px;">Time</span>
<span class="t" style="left:179.7px;top:632.2px;width:40px;text-align:right;font-size:10px;line-height:12px;color:#696969;transform-origin:100% 50%;transform:rotate(-20deg) scaleX(.947)">02:00</span>
<span class="t" style="left:267.4px;top:632.2px;width:40px;text-align:right;font-size:10px;line-height:12px;color:#696969;transform-origin:100% 50%;transform:rotate(-20deg) scaleX(.947)">04:00</span>
<span class="t" style="left:355.1px;top:632.2px;width:40px;text-align:right;font-size:10px;line-height:12px;color:#696969;transform-origin:100% 50%;transform:rotate(-20deg) scaleX(.947)">06:00</span>
<span class="t" style="left:442.8px;top:632.2px;width:40px;text-align:right;font-size:10px;line-height:12px;color:#696969;transform-origin:100% 50%;transform:rotate(-20deg) scaleX(.947)">08:00</span>
<span class="t" style="left:530.5px;top:632.2px;width:40px;text-align:right;font-size:10px;line-height:12px;color:#696969;transform-origin:100% 50%;transform:rotate(-20deg) scaleX(.947)">10:00</span>
<span class="t" style="left:618.2px;top:632.2px;width:40px;text-align:right;font-size:10px;line-height:12px;color:#696969;transform-origin:100% 50%;transform:rotate(-20deg) scaleX(.947)">12:00</span>
<span class="t" style="left:705.9px;top:632.2px;width:40px;text-align:right;font-size:10px;line-height:12px;color:#696969;transform-origin:100% 50%;transform:rotate(-20deg) scaleX(.947)">14:00</span>
<span class="t" style="left:793.6px;top:632.2px;width:40px;text-align:right;font-size:10px;line-height:12px;color:#696969;transform-origin:100% 50%;transform:rotate(-20deg) scaleX(.947)">16:00</span>
<span class="t" style="left:881.3px;top:632.2px;width:40px;text-align:right;font-size:10px;line-height:12px;color:#696969;transform-origin:100% 50%;transform:rotate(-20deg) scaleX(.947)">18:00</span>
<span class="t" style="left:969.0px;top:632.2px;width:40px;text-align:right;font-size:10px;line-height:12px;color:#696969;transform-origin:100% 50%;transform:rotate(-20deg) scaleX(.947)">20:00</span>
<span class="t" style="left:1056.7px;top:632.2px;width:40px;text-align:right;font-size:10px;line-height:12px;color:#696969;transform-origin:100% 50%;transform:rotate(-20deg) scaleX(.947)">22:00</span>
<div class="a" style="left:1212.6px;top:135.2px;width:322.6px;height:482.4px;box-sizing:border-box;border:1.5px solid #6d6668;border-radius:5px;background:#7dbad7;overflow:hidden">
<div class="a" style="left:315px;top:0;width:6px;height:447px;background:linear-gradient(90deg,#c6c9ca,#c0c2c3 60%,#a8a8aa);border-radius:0 0 3px 3px"></div>
<div class="a" style="left:4.4px;top:5.2px;width:305px;height:247.200px;background:#dcf0fd;border-radius:6px"></div>
<div class="a" style="left:303.400px;top:15px;width:1.2px;height:110px;background:#d0e2f0"></div><div class="a" style="left:303.400px;top:130px;width:1.2px;height:112px;background:#d0e2f0"></div>
<div class="a" style="left:4.4px;top:257.600px;width:305px;height:110.500px;background:#e6fef2;border-radius:6px"></div>
<div class="a" style="left:4.4px;top:373.300px;width:305px;height:120px;background:#ffe4e4;border-radius:6px 6px 0 0"></div>
</div>
<span class="t" style="left:1228.80px;top:153.25px;font-size:12.35px;line-height:12.35px;color:#222;font-weight:bold;">Vehicle Number</span>
<span class="t" style="left:1321.60px;top:153.25px;font-size:12.35px;line-height:12.35px;color:#222;">:</span>
<span class="t" style="left:1333.40px;top:153.25px;font-size:12.35px;line-height:12.35px;color:#222;letter-spacing:-0.040px;">RJ19GF1356</span>
<span class="t" style="left:1230.00px;top:176.60px;font-size:12.35px;line-height:12.35px;color:#222;font-weight:bold;letter-spacing:-0.534px;">Time</span>
<span class="t" style="left:1257.40px;top:176.60px;font-size:12.35px;line-height:12.35px;color:#222;">:</span>
<span class="t" style="left:1265.60px;top:176.60px;font-size:12.35px;line-height:12.35px;color:#222;letter-spacing:-0.028px;">2025-01-19 00:00</span>
<span class="t" style="left:1230.00px;top:199.95px;font-size:12.35px;line-height:12.35px;color:#222;font-weight:bold;letter-spacing:-0.432px;">Tilt</span>
<span class="t" style="left:1247.40px;top:199.95px;font-size:12.35px;line-height:12.35px;color:#222;">:</span>
<span class="t" style="left:1255.40px;top:199.95px;font-size:12.35px;line-height:12.35px;color:#222;">1</span>
<span class="t" style="left:1230.00px;top:223.30px;font-size:12.35px;line-height:12.35px;color:#222;font-weight:bold;letter-spacing:-0.366px;">Speed</span>
<span class="t" style="left:1266.00px;top:223.30px;font-size:12.35px;line-height:12.35px;color:#222;">:</span>
<span class="t" style="left:1274.30px;top:223.30px;font-size:12.35px;line-height:12.35px;color:#222;letter-spacing:-0.104px;">0.00 km/h</span>
<span class="t" style="left:1228.80px;top:246.65px;font-size:12.35px;line-height:12.35px;color:#222;font-weight:bold;letter-spacing:-0.112px;">Ignition</span>
<span class="t" style="left:1273.00px;top:246.65px;font-size:12.35px;line-height:12.35px;color:#222;">:</span>
<span class="t" style="left:1282.10px;top:246.65px;font-size:12.35px;line-height:12.35px;color:#222;letter-spacing:-0.788px;">No</span>
<span class="t" style="left:1303.90px;top:246.65px;font-size:12.35px;line-height:12.35px;color:#222;font-weight:bold;letter-spacing:-0.093px;">Motion</span>
<span class="t" style="left:1344.40px;top:246.65px;font-size:12.35px;line-height:12.35px;color:#222;letter-spacing:-0.209px;">:No</span>
<span class="t" style="left:1228.80px;top:270.00px;font-size:12.35px;line-height:12.35px;color:#222;font-weight:bold;letter-spacing:-0.168px;">Latitude:</span>
<span class="t" style="left:1285.60px;top:270.00px;font-size:12.35px;line-height:12.35px;color:#222;letter-spacing:0.006px;">24.3361433</span>
<span class="t" style="left:1228.80px;top:293.35px;font-size:12.35px;line-height:12.35px;color:#222;font-weight:bold;letter-spacing:-0.132px;">Longitude:</span>
<span class="t" style="left:1297.60px;top:293.35px;font-size:12.35px;line-height:12.35px;color:#222;letter-spacing:-0.098px;">72.870105</span>
<span class="t" style="left:1228.80px;top:316.70px;font-size:12.35px;line-height:12.35px;color:#222;font-weight:bold;letter-spacing:-0.396px;">Fuel</span>
<span class="t" style="left:1253.40px;top:316.70px;font-size:12.35px;line-height:12.35px;color:#222;">:</span>
<span class="t" style="left:1262.60px;top:316.70px;font-size:12.35px;line-height:12.35px;color:#222;letter-spacing:-1.237px;">73</span>
<span class="t" style="left:1228.80px;top:340.05px;font-size:12.35px;line-height:12.35px;color:#222;font-weight:bold;letter-spacing:-0.026px;">Distance</span>
<span class="t" style="left:1280.50px;top:340.05px;font-size:12.35px;line-height:12.35px;color:#222;">:</span>
<span class="t" style="left:1288.60px;top:340.05px;font-size:12.35px;line-height:12.35px;color:#222;">0</span>
<span class="t" style="left:1230.00px;top:363.40px;font-size:12.35px;line-height:12.35px;color:#222;font-weight:bold;letter-spacing:-0.123px;">Total Distance</span>
<span class="t" style="left:1312.30px;top:363.40px;font-size:12.35px;line-height:12.35px;color:#222;">:</span>
<span class="t" style="left:1324.40px;top:363.40px;font-size:12.35px;line-height:12.35px;color:#222;letter-spacing:-0.082px;">8797.74 km</span>
<span class="t" style="left:1225.80px;top:406.95px;font-size:12.35px;line-height:12.35px;color:#222;font-weight:bold;letter-spacing:-0.081px;">Odometer:</span>
<span class="t" style="left:1291.40px;top:406.95px;font-size:12.35px;line-height:12.35px;color:#222;letter-spacing:0.029px;">START (8797.74 km) END (8804.54 km)</span>
<span class="t" style="left:1225.80px;top:430.25px;font-size:12.35px;line-height:12.35px;color:#222;font-weight:bold;letter-spacing:-0.175px;">Fuel:</span>
<span class="t" style="left:1258.80px;top:430.25px;font-size:12.35px;line-height:12.35px;color:#222;letter-spacing:0.007px;">START (73Ltr)- END (114Ltr)</span>
<span class="t" style="left:1225.80px;top:453.55px;font-size:12.35px;line-height:12.35px;color:#222;font-weight:bold;letter-spacing:-0.048px;">From Address:</span>
<span class="t" style="left:1226.50px;top:476.85px;font-size:12.35px;line-height:12.35px;color:#222;font-weight:bold;letter-spacing:-0.188px;">To Address:</span>
<span class="t" style="left:1300.10px;top:476.85px;font-size:12.35px;line-height:12.35px;color:#222;letter-spacing:-0.557px;">NA</span>
<span class="t" style="left:1225.60px;top:522.85px;font-size:12.35px;line-height:12.35px;color:#222;font-weight:bold;letter-spacing:-0.069px;">Distance Travel:</span>
<span class="t" style="left:1324.10px;top:522.85px;font-size:12.35px;line-height:12.35px;color:#222;letter-spacing:-0.022px;">6.80 km</span>
<span class="t" style="left:1225.60px;top:546.55px;font-size:12.35px;line-height:12.35px;color:#222;font-weight:bold;letter-spacing:-0.031px;">Exp.Consumption:</span>
<span class="t" style="left:1339.10px;top:546.55px;font-size:12.35px;line-height:12.35px;color:#222;letter-spacing:0.025px;">2.27Ltrs</span>
<span class="t" style="left:1225.60px;top:569.55px;font-size:12.35px;line-height:12.35px;color:#222;font-weight:bold;letter-spacing:-0.048px;">Actual Consumption:</span>
<span class="t" style="left:1354.40px;top:569.55px;font-size:12.35px;line-height:12.35px;color:#222;letter-spacing:-0.084px;">7.8 Ltrs</span>
<span class="t" style="left:1225.60px;top:593.05px;font-size:12.35px;line-height:12.35px;color:#222;font-weight:bold;letter-spacing:-0.067px;">Deviation:</span>
<span class="t" style="left:1288.90px;top:593.05px;font-size:12.35px;line-height:12.35px;color:#e3242b;letter-spacing:-0.057px;">5.53 Ltrs</span>
</body></html>
